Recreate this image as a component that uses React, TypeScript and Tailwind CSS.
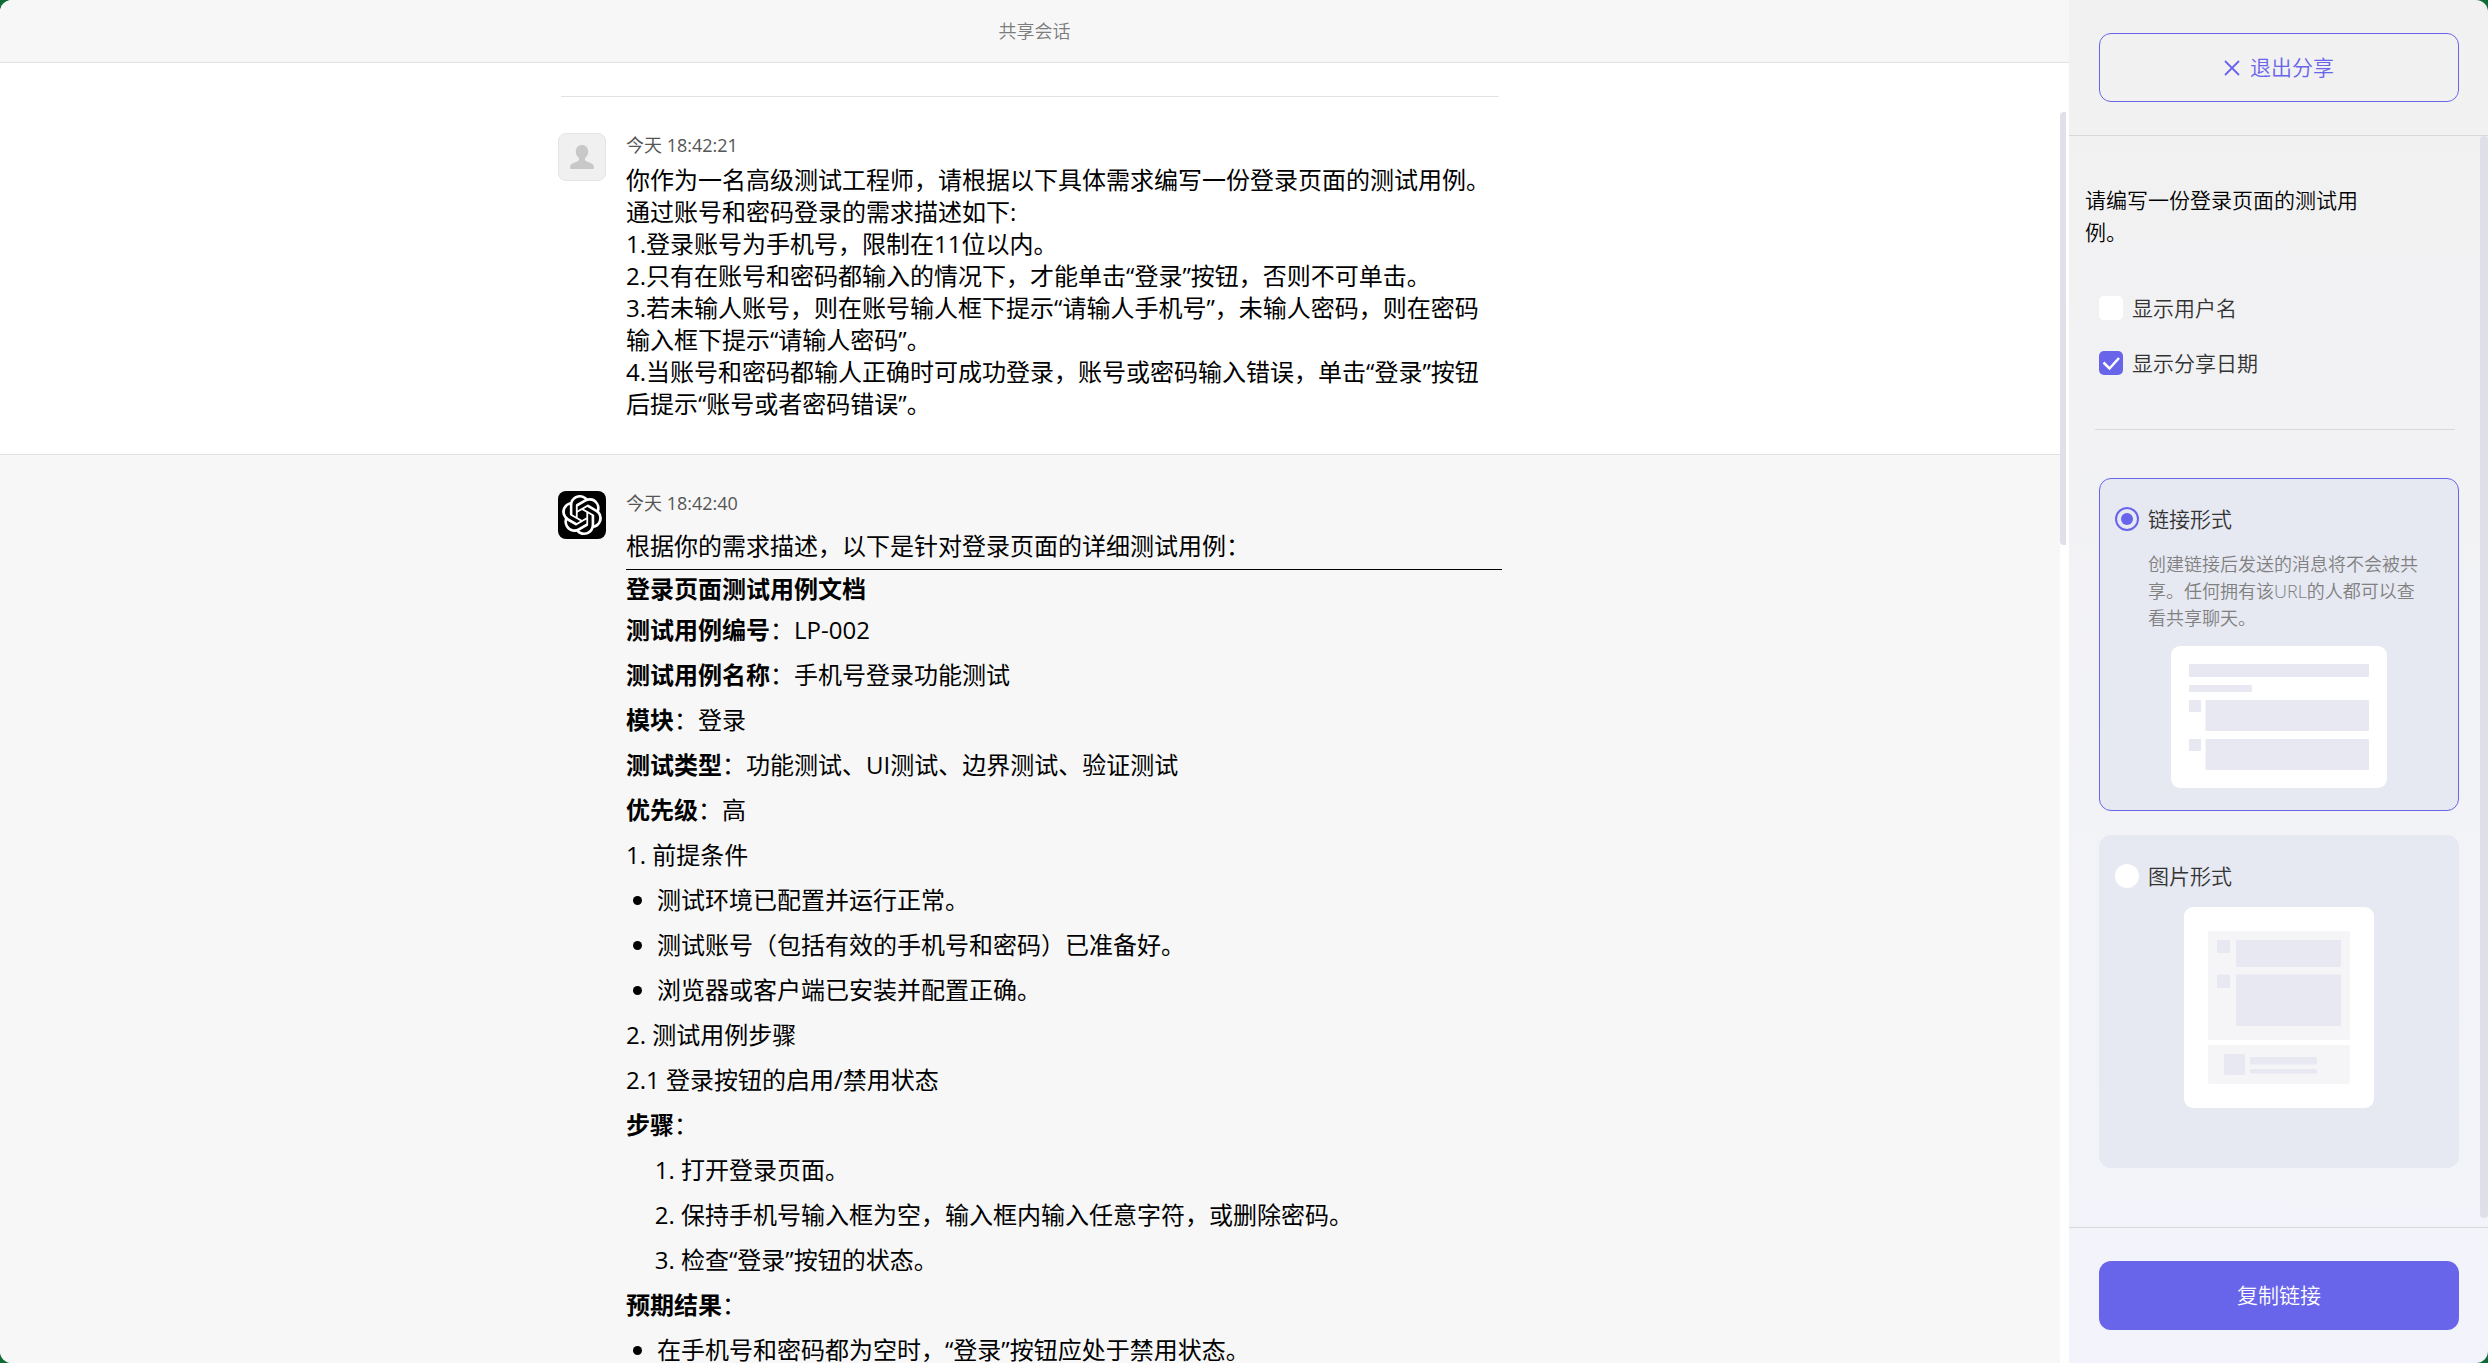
import { useState } from "react";
import type { ReactNode } from "react";
import { SiOpenai } from "react-icons/si";

const requirement = [
  "你作为一名高级测试工程师，请根据以下具体需求编写一份登录页面的测试用例。",
  "通过账号和密码登录的需求描述如下:",
  "1.登录账号为手机号，限制在11位以内。",
  "2.只有在账号和密码都输入的情况下，才能单击“登录”按钮，否则不可单击。",
  "3.若未输人账号，则在账号输人框下提示“请输人手机号”，未输人密码，则在密码输入框下提示“请输人密码”。",
  "4.当账号和密码都输人正确时可成功登录，账号或密码输入错误，单击“登录”按钮后提示“账号或者密码错误”。",
];

const fields = [
  { name: "测试用例编号", value: "LP-002" },
  { name: "测试用例名称", value: "手机号登录功能测试" },
  { name: "模块", value: "登录" },
  { name: "测试类型", value: "功能测试、UI测试、边界测试、验证测试" },
  { name: "优先级", value: "高" },
];

function UserAvatar() {
  return (
    <div className="flex size-12 shrink-0 items-center justify-center rounded-lg border border-[#e4e4e4] bg-[#f0f0f0]">
      <svg viewBox="0 0 24 24" className="size-6" fill="#c8c8c8">
        <path d="M12 0c3.600 0 6.200 2.700 6.200 6.500 0 2.700-1.300 5.200-3.200 6.500v1.700c0 .6.300 1.100.9 1.300l5.700 2.600C23.200 19.400 24 20.800 24 22.400c0 1-.6 1.600-1.500 1.600h-21C.6 24 0 23.400 0 22.400c0-1.600.8-3 2.400-3.800L8.100 16c.6-.2.900-.7.9-1.300V13C7.100 11.700 5.800 9.200 5.800 6.500 5.800 2.700 8.400 0 12 0z" />
      </svg>
    </div>
  );
}

function BotAvatar() {
  return (
    <div className="flex size-12 shrink-0 items-center justify-center rounded-lg bg-black text-white">
      <SiOpenai size={40} />
    </div>
  );
}

function Message({ avatar, time, children }: { avatar: ReactNode; time: string; children: ReactNode }) {
  return (
    <article className="mx-auto flex max-w-[944px] gap-5 pt-9 pb-[34px]">
      {avatar}
      <div className="min-w-0 flex-1">
        <time className="block text-[18px] leading-6 text-[#555]">{time}</time>
        {children}
      </div>
    </article>
  );
}

function LinkPreview() {
  return (
    <svg viewBox="0 0 216 142" className="mx-auto mt-3.5 block w-[216px]" fill="#e8e8f2">
      <rect width="216" height="142" rx="9" fill="#fff" />
      <rect x="18" y="18" width="180" height="13" rx="1" />
      <rect x="18" y="39" width="63" height="7" rx="1" />
      <rect x="18" y="54" width="12" height="12" rx="1" />
      <rect x="34.500" y="54" width="163.500" height="31" rx="1" />
      <rect x="18" y="93" width="12" height="12" rx="1" />
      <rect x="34.500" y="93" width="163.500" height="31" rx="1" />
    </svg>
  );
}

function ImagePreview() {
  return (
    <svg viewBox="0 0 190 201" className="mx-auto mt-[19px] block w-[190px]" fill="#e8e8f2">
      <rect width="190" height="201" rx="9" fill="#fff" />
      <rect x="24" y="24" width="142" height="109" rx="2" fill="#f5f5f8" />
      <rect x="33" y="33" width="13" height="13" rx="1" />
      <rect x="52" y="33" width="105" height="27" rx="1" />
      <rect x="33" y="67.500" width="13" height="13.500" rx="1" />
      <rect x="52" y="67.500" width="105" height="51.500" rx="1" />
      <rect x="24" y="138" width="142" height="39" rx="2" fill="#f5f5f8" />
      <rect x="40" y="147" width="21" height="21" rx="1" />
      <rect x="66" y="150" width="67" height="7.500" rx="1" />
      <rect x="66" y="162" width="67" height="4.500" rx="1" />
    </svg>
  );
}

function CheckOption({ label, checked, onChange }: { label: string; checked: boolean; onChange: () => void }) {
  return (
    <label className="flex items-center gap-[9px] text-[21px] leading-6 text-[#333]">
      <span className="grid size-6 *:col-start-1 *:row-start-1">
        <input
          type="checkbox"
          checked={checked}
          onChange={onChange}
          className="peer size-6 appearance-none rounded-[5px] bg-white checked:bg-[#6965ea]"
        />
        <svg
          viewBox="0 0 24 24"
          className="pointer-events-none hidden size-6 peer-checked:block"
          fill="none"
          stroke="#fff"
          strokeWidth="2.500"
        >
          <path d="M4.500 11.500l6 6L20 7" />
        </svg>
      </span>
      {label}
    </label>
  );
}

function FormatRadio({ label, checked, onChange }: { label: string; checked: boolean; onChange: () => void }) {
  return (
    <label className="flex items-center gap-[9px] text-[21px] leading-6 text-[#333]">
      <input
        type="radio"
        name="format"
        checked={checked}
        onChange={onChange}
        className="grid size-6 appearance-none place-items-center rounded-full bg-white checked:border-2 checked:border-[#6965ea] checked:bg-transparent checked:before:size-3 checked:before:rounded-full checked:before:bg-[#6965ea]"
      />
      {label}
    </label>
  );
}

function Conversation() {
  return (
    <main className="flex min-w-0 flex-1 flex-col bg-white">
      <header className="flex h-[63px] shrink-0 items-center justify-center border-b border-[#e2e2e2] bg-[#f7f7f7]">
        <h1 className="text-[18px] leading-6 font-[350] text-[#7c7c7c]">共享会话</h1>
      </header>
      <div className="flex min-h-0 flex-1">
        <div className="min-w-0 flex-1 overflow-hidden text-[24px] text-black">
          <section className="border-b border-[#e2e2e2] pt-[33px]">
            <hr className="mx-auto max-w-[938px] border-[#e2e2e2]" />
            <Message avatar={<UserAvatar />} time="今天 18:42:21">
              <div className="mt-[7px] leading-8">
                {requirement.map((line) => (
                  <p key={line}>{line}</p>
                ))}
              </div>
            </Message>
          </section>
          <section className="bg-[#f7f7f7]">
            <Message avatar={<BotAvatar />} time="今天 18:42:40">
              <p className="mt-2 leading-[46px]">根据你的需求描述，以下是针对登录页面的详细测试用例：</p>
              <hr className="border-black" />
              <h2 className="leading-[37px] font-bold">登录页面测试用例文档</h2>
              <div className="leading-[45px]">
                {fields.map((field) => (
                  <p key={field.name}>
                    <strong>{field.name}</strong>：{field.value}
                  </p>
                ))}
                <p>1. 前提条件</p>
                <ul className="list-disc pl-[31px]">
                  <li>测试环境已配置并运行正常。</li>
                  <li>测试账号（包括有效的手机号和密码）已准备好。</li>
                  <li>浏览器或客户端已安装并配置正确。</li>
                </ul>
                <p>2. 测试用例步骤</p>
                <p>2.1 登录按钮的启用/禁用状态</p>
                <p>
                  <strong>步骤</strong>：
                </p>
                <ol className="list-decimal pl-[55px]">
                  <li>打开登录页面。</li>
                  <li>保持手机号输入框为空，输入框内输入任意字符，或删除密码。</li>
                  <li>检查“登录”按钮的状态。</li>
                </ol>
                <p>
                  <strong>预期结果</strong>：
                </p>
                <ul className="list-disc pl-[31px]">
                  <li>在手机号和密码都为空时，“登录”按钮应处于禁用状态。</li>
                </ul>
              </div>
            </Message>
          </section>
        </div>
        {/* Scrollbar */}
        <div className="w-[9px] shrink-0 pt-[49px]">
          <div className="h-[433px] w-1.5 rounded-l bg-[#e0e0ea]"></div>
        </div>
      </div>
    </main>
  );
}

function SharePanel() {
  const [showUser, setShowUser] = useState(false);
  const [showDate, setShowDate] = useState(true);
  const [format, setFormat] = useState("link");

  return (
    <aside className="flex w-[419px] shrink-0 flex-col bg-linear-to-b from-[#f1f1f1] to-[#f3f4fb] font-[350]">
      <div className="h-[136px] shrink-0 border-b border-[#d9d9dc] pt-[33px] pr-[29px] pl-[30px]">
        <button
          type="button"
          className="flex h-[69px] w-full items-center justify-center gap-2.5 rounded-xl border border-[#6965ea] text-[21px] text-[#6965ea]"
        >
          <svg viewBox="0 0 16 16" className="size-4" fill="none" stroke="currentColor" strokeWidth="1.800">
            <path d="M1 1l14 14M15 1L1 15" />
          </svg>
          退出分享
        </button>
      </div>

      <div className="flex min-h-0 flex-1">
        <div className="min-w-0 flex-1 overflow-hidden pr-[21px]">
          <h2 className="mt-12 ml-4 max-w-[290px] text-[21px] leading-8 text-black">
            请编写一份登录页面的测试用例。
          </h2>
          <div className="mt-12 ml-[30px] flex flex-col gap-[31px]">
            <CheckOption label="显示用户名" checked={showUser} onChange={() => setShowUser(!showUser)} />
            <CheckOption label="显示分享日期" checked={showDate} onChange={() => setShowDate(!showDate)} />
          </div>
          <hr className="mt-[54px] mr-1 ml-[26px] border-[#d9d9dc]" />
          <div
            className={
              "mt-12 ml-[30px] h-[333px] rounded-xl border bg-[#e6e8f2] px-[15px] pt-7 " +
              (format === "link" ? "border-[#6965ea]" : "border-[#e6e8f2]")
            }
          >
            <FormatRadio label="链接形式" checked={format === "link"} onChange={() => setFormat("link")} />
            <p className="mt-5 ml-[33px] max-w-[275px] text-[18px] leading-[27px] text-[#808080]">
              创建链接后发送的消息将不会被共享。任何拥有该URL的人都可以查看共享聊天。
            </p>
            <LinkPreview />
          </div>
          <div
            className={
              "mt-6 ml-[30px] h-[333px] rounded-xl border bg-[#e6e8f2] px-[15px] pt-7 " +
              (format === "image" ? "border-[#6965ea]" : "border-[#e6e8f2]")
            }
          >
            <FormatRadio label="图片形式" checked={format === "image"} onChange={() => setFormat("image")} />
            <ImagePreview />
          </div>
        </div>
        {/* Scrollbar */}
        <div className="w-2 shrink-0 pb-[9px]">
          <div className="h-full rounded bg-[#dfdfe9]"></div>
        </div>
      </div>

      <div className="shrink-0 border-t border-[#d9d9dc] pt-[33px] pr-[29px] pb-[33px] pl-[30px]">
        <button type="button" className="h-[69px] w-full rounded-xl bg-[#6965ea] text-[21px] text-white">
          复制链接
        </button>
      </div>
    </aside>
  );
}

export default function App() {
  return (
    <div className="h-screen bg-[#0f6b35] font-['Open_Sans','Noto_Sans_CJK_SC',sans-serif]" lang="zh-CN">
      <div className="flex h-full overflow-hidden rounded-xl">
        <Conversation />
        <SharePanel />
      </div>
    </div>
  );
}
